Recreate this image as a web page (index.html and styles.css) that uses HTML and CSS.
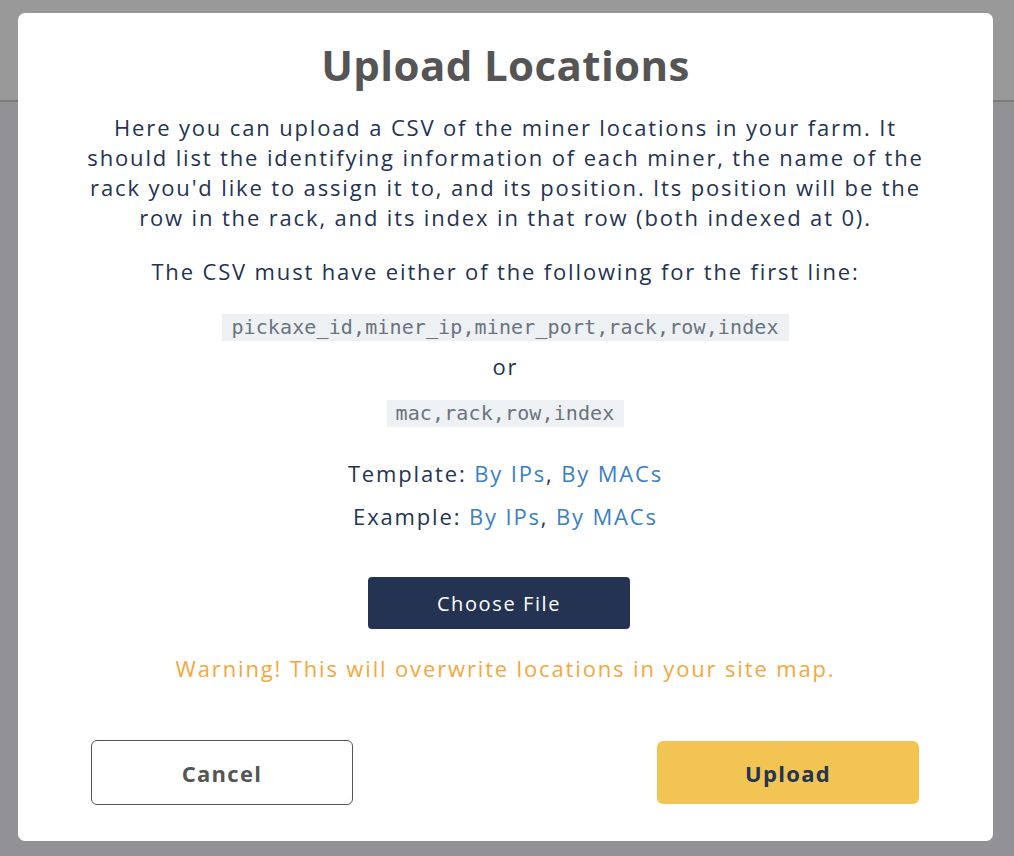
FILE: index.html
```html
<!DOCTYPE html>
<html lang="en">
<head>
  <meta charset="UTF-8" />
  <meta name="viewport" content="width=device-width, initial-scale=1" />
  <title>Upload Locations</title>
  <link rel="stylesheet" href="styles.css">
</head>
<body>
  <header class="topbar"></header>
  <main class="page"></main>

  <div class="overlay">
    <div class="modal">
      <h1>Upload Locations</h1>
      <p class="intro">Here you can upload a CSV of the miner locations in your farm. It should list the identifying information of each miner, the name of the rack you'd like to assign it to, and its position. Its position will be the row in the rack, and its index in that row (both indexed at 0).</p>
      <p class="lead">The CSV must have either of the following for the first line:</p>
      <div class="formats">
        <code>pickaxe_id,miner_ip,miner_port,rack,row,index</code>
        <span class="or">or</span>
        <code>mac,rack,row,index</code>
      </div>
      <div class="links">
        <div>Template: <a href="#">By IPs</a>, <a href="#">By MACs</a></div>
        <div>Example: <a href="#">By IPs</a>, <a href="#">By MACs</a></div>
      </div>
      <button class="btn-file">Choose File</button>
      <p class="warning">Warning! This will overwrite locations in your site map.</p>
      <div class="actions">
        <button class="btn btn-cancel">Cancel</button>
        <button class="btn btn-upload">Upload</button>
      </div>
    </div>
  </div>
</body>
</html>
```

FILE: styles.css
```css
body {
  margin: 0;
  font-family: 'Open Sans', 'Noto Sans', sans-serif;
  background: #f3f3fa;
  height: 100vh;
  overflow: hidden;
}

.topbar {
  height: 100px;
  background: #fff;
  border-bottom: 2px solid #cccccc;
}

.overlay {
  position: fixed;
  inset: 0;
  background: rgba(0, 0, 0, 0.4);
  padding: 13px 0 0 18px;
}

.modal {
  background: #fff;
  width: 975px;
  height: 828px;
  border-radius: 7px;
  box-sizing: border-box;
  padding: 27px 60px 0;
  text-align: center;
  color: #243352;
  display: flex;
  flex-direction: column;
  align-items: center;
  letter-spacing: 1.85px;
}

h1 {
  margin: 0;
  font-size: 42px;
  line-height: 50px;
  font-weight: 700;
  letter-spacing: 0.4px;
  color: #555;
}

.intro {
  margin: 22px 0 0;
  font-size: 22px;
  line-height: 30px;
}

.lead {
  margin: 24px 0 0;
  font-size: 22px;
  line-height: 30px;
}

.formats {
  margin-top: 28px;
  display: flex;
  flex-direction: column;
  align-items: center;
}

code {
  font-family: 'DejaVu Sans Mono', monospace;
  font-size: 20px;
  line-height: 27px;
  letter-spacing: 0.12px;
  padding: 0 10px 0 9px;
  background: #edf1f4;
  color: #6b7280;
}

.or {
  font-size: 22px;
  line-height: 30px;
  margin: 10px 0 19px;
}

.links {
  margin-top: 31px;
  font-size: 22px;
  line-height: 30px;
  display: flex;
  flex-direction: column;
  gap: 13px;
}

.links a {
  color: #3b7fc4;
  text-decoration: none;
}

.btn-file {
  margin: 46px 13px 0 0;
  width: 262px;
  height: 52px;
  border: none;
  border-radius: 4px;
  background: #243352;
  color: #fff;
  font-family: inherit;
  font-size: 20px;
  letter-spacing: 1.6px;
  cursor: pointer;
}

.warning {
  margin: 24px 0 0;
  font-size: 22px;
  line-height: 30px;
  color: #f5a73b;
}

.actions {
  margin-top: 57px;
  width: 100%;
  display: flex;
  justify-content: space-between;
  align-items: center;
  padding: 0 14px 0 13px;
  box-sizing: border-box;
}

.btn {
  width: 262px;
  border-radius: 6px;
  font-family: inherit;
  font-size: 22px;
  font-weight: 700;
  letter-spacing: 1.3px;
  cursor: pointer;
}

.btn-cancel {
  height: 65px;
  background: #fff;
  border: 1px solid #555;
  color: #555;
}

.btn-upload {
  height: 63px;
  background: #f2c453;
  border: none;
  color: #243352;
}
```
